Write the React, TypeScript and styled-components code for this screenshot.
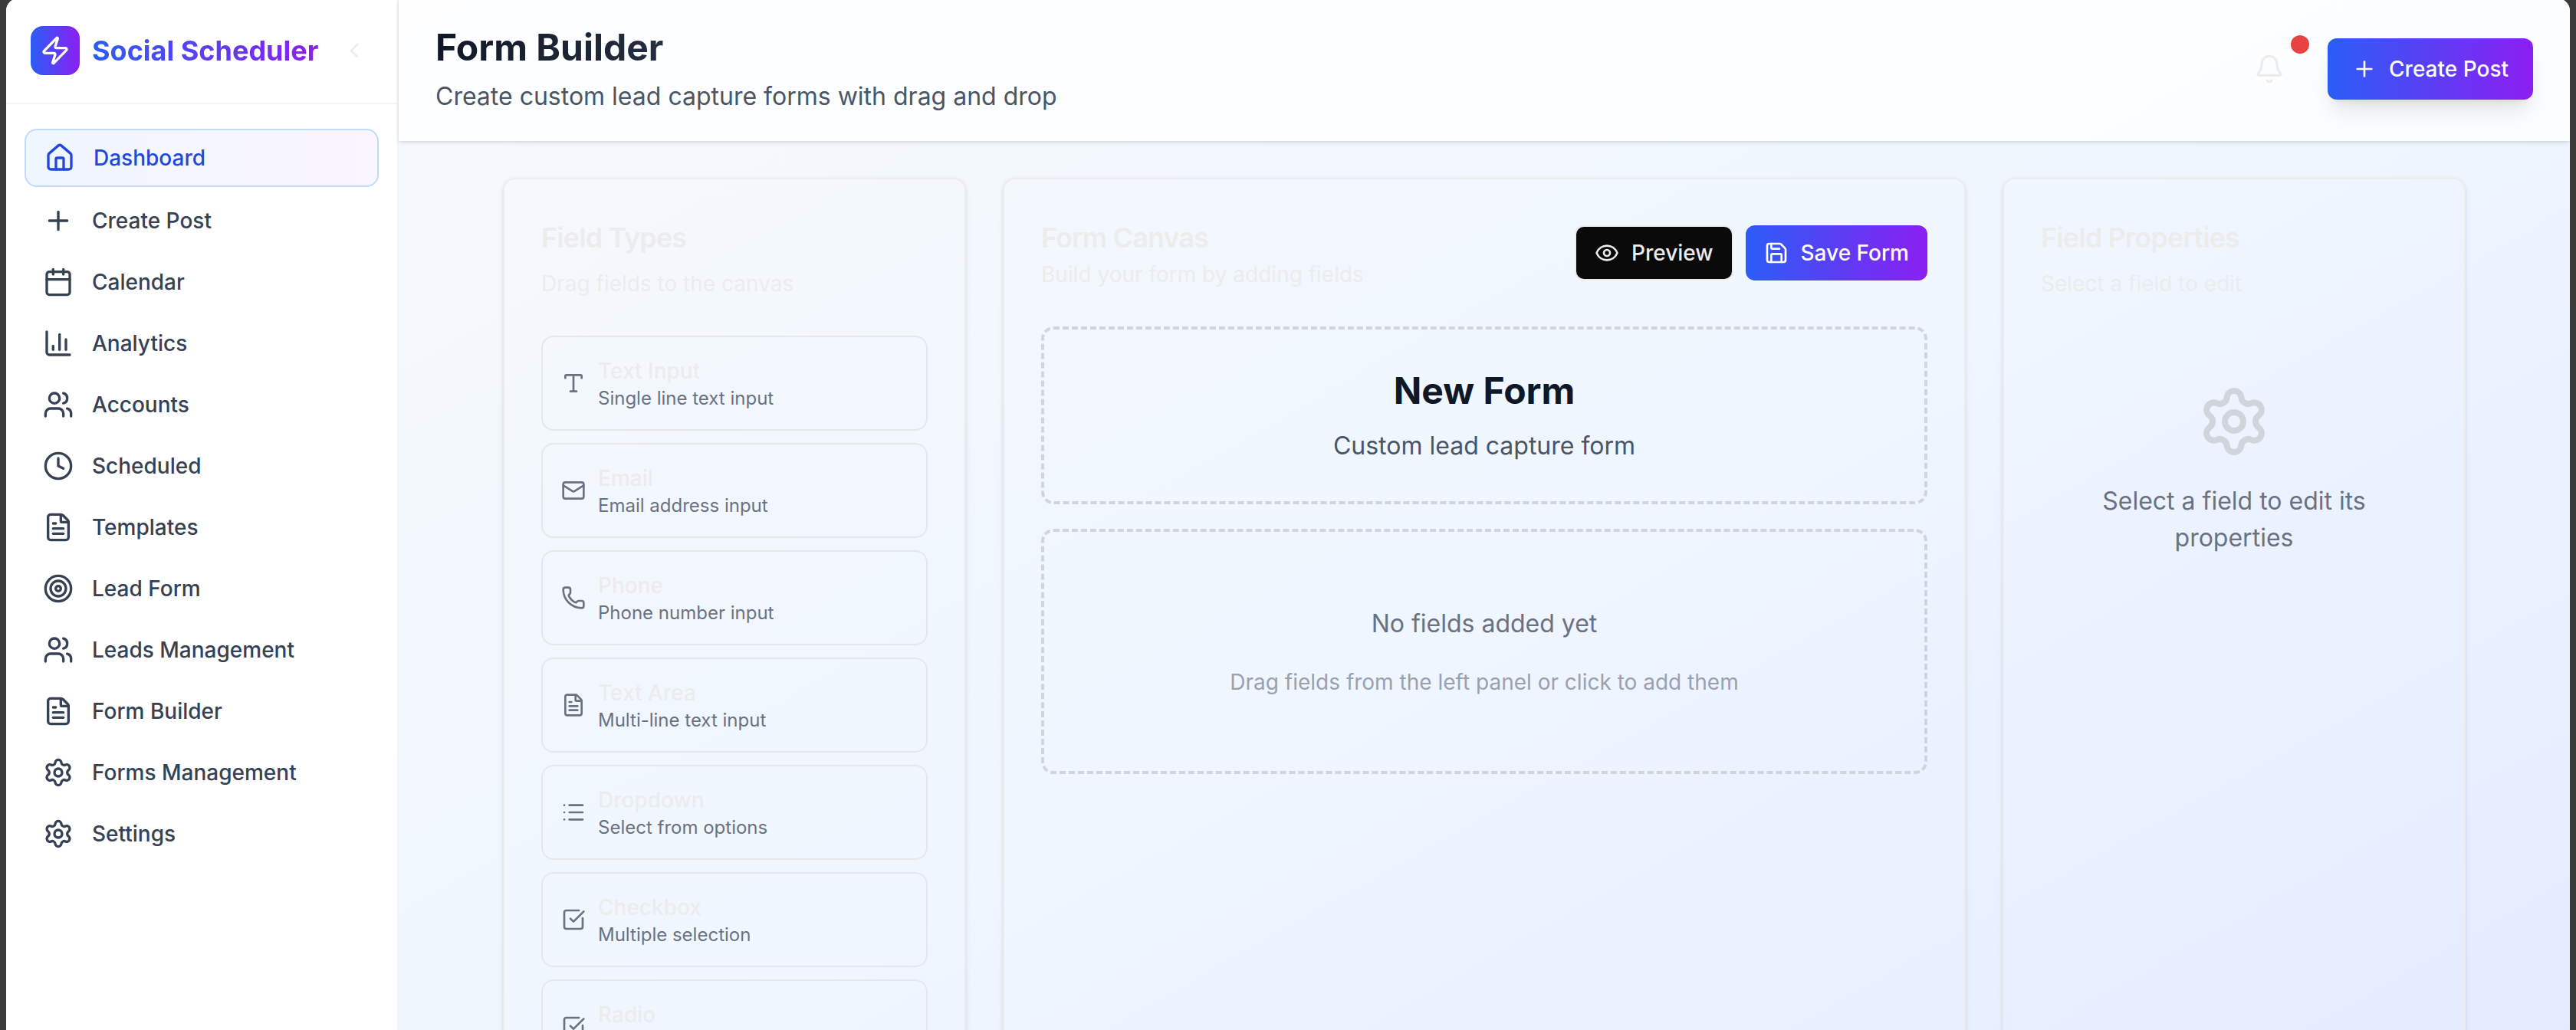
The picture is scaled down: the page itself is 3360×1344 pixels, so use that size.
import React from "react";
import styled, { createGlobalStyle, css } from "styled-components";
import {
  Bell,
  Calendar,
  ChartColumn,
  ChevronLeft,
  Clock,
  Eye,
  FileText,
  House,
  List,
  Mail,
  Phone,
  Plus,
  Save,
  Settings,
  SquareCheckBig,
  Target,
  Type,
  Users,
  Zap,
  type LucideIcon,
} from "lucide-react";

const colors = {
  faint: "#ececec",
  line: "#f3f4f6",
  outline: "#e5e7eb",
  dash: "#d1d5db",
  ink: "#101828",
  body: "#4a5565",
  nav: "#364153",
  muted: "#6a7282",
  soft: "#99a1af",
  brand: "linear-gradient(90deg, #2b5df6, #8b1ff2)",
};

const GlobalStyle = createGlobalStyle`
  *, *::before, *::after { box-sizing: border-box; }
  body {
    margin: 0;
    background: #3b3b3b;
    font-family: Inter, "Liberation Sans", sans-serif;
    font-size: 32px;
    line-height: 48px;
    color: ${colors.ink};
    -webkit-font-smoothing: antialiased;
  }
  h1, h2, h3, p, ul { margin: 0; padding: 0; }
  ul { list-style: none; }
  button { font: inherit; color: inherit; border: 0; background: none; padding: 0; cursor: pointer; }
  a { color: inherit; text-decoration: none; }
  svg { display: block; flex-shrink: 0; }
`;

const Viewport = styled.div`
  height: 100vh;
  overflow: hidden;
`;

const Window = styled.div`
  display: flex;
  min-height: 140vh;
  margin: -2px 8px 0;
  border-radius: 16px;
  overflow: hidden;
  background: linear-gradient(to bottom right, #f8fafc, #eff6ff, #e0e7ff);
`;

const Sidebar = styled.aside`
  flex: 0 0 512px;
  background: #fff;
  border-right: 2px solid ${colors.line};
`;

const Brand = styled.div`
  display: flex;
  align-items: center;
  justify-content: space-between;
  padding: 32px;
  border-bottom: 2px solid ${colors.line};
`;

const BrandName = styled.a`
  display: flex;
  align-items: center;
  gap: 16px;
`;

const BrandMark = styled.span`
  display: grid;
  place-items: center;
  width: 64px;
  height: 64px;
  border-radius: 16px;
  background: ${colors.brand};
  color: #fff;
`;

const BrandText = styled.span`
  font-size: 36px;
  font-weight: 700;
  line-height: 56px;
  background: ${colors.brand};
  background-clip: text;
  color: transparent;
`;

const CollapseButton = styled.button`
  display: grid;
  place-items: center;
  width: 48px;
  height: 72px;
  color: ${colors.faint};
`;

const NavList = styled.ul`
  display: flex;
  flex-direction: column;
  gap: 8px;
  padding: 32px 24px;
`;

const NavLink = styled.a<{ $active?: boolean }>`
  display: flex;
  align-items: center;
  gap: 24px;
  padding: 16px 24px;
  border-radius: 16px;
  font-size: 28px;
  font-weight: 500;
  line-height: 40px;
  color: ${colors.nav};
  ${({ $active }) =>
    $active &&
    css`
      border: 2px solid #bfdbfe;
      background: linear-gradient(90deg, #eff6ff, #faf5ff);
      color: #2247dd;
    `}
`;

const Main = styled.main`
  flex: 1;
  min-width: 0;
`;

const TopBar = styled.header`
  display: flex;
  align-items: center;
  justify-content: space-between;
  padding: 32px 48px;
  border-bottom: 2px solid rgba(255, 255, 255, 0.2);
  background: rgba(255, 255, 255, 0.8);
  box-shadow: 0 2px 6px rgba(0, 0, 0, 0.1), 0 2px 4px -2px rgba(0, 0, 0, 0.1);
`;

const Heading = styled.div`
  display: grid;
  gap: 8px;
`;

const PageTitle = styled.h1`
  font-size: 48px;
  font-weight: 700;
  line-height: 64px;
  background: linear-gradient(90deg, #101828, #4a5565);
  background-clip: text;
  color: transparent;
`;

const PageSubtitle = styled.p`
  color: ${colors.body};
`;

const TopActions = styled.div`
  display: flex;
  align-items: center;
  gap: 32px;
`;

const BellButton = styled.button`
  position: relative;
  padding: 16px 24px;
  color: ${colors.faint};
`;

const BellBadge = styled.span`
  position: absolute;
  top: -8px;
  right: -8px;
  width: 24px;
  height: 24px;
  border-radius: 50%;
  background: #e84343;
`;

const Button = styled.button<{ $variant?: "outline"; $large?: boolean }>`
  display: flex;
  align-items: center;
  gap: 16px;
  height: ${({ $large }) => ($large ? "80px" : "72px")};
  padding: 0 ${({ $large }) => ($large ? "32px" : "24px")};
  border-radius: 12px;
  font-size: 28px;
  font-weight: 500;
  line-height: 40px;
  color: #fff;
  background: ${colors.brand};
  ${({ $large }) =>
    $large && "box-shadow: 0 20px 30px -6px rgba(0, 0, 0, 0.1), 0 8px 12px -8px rgba(0, 0, 0, 0.1);"}
  ${({ $variant }) =>
    $variant === "outline" &&
    css`
      border: 2px solid ${colors.faint};
      background: #0a0a0a;
      color: ${colors.faint};
    `}
`;

const Board = styled.div`
  display: grid;
  grid-template-columns: repeat(4, 1fr);
  gap: 48px;
  width: 100%;
  max-width: 2656px;
  margin: 0 auto;
  padding: 48px;
`;

const Panel = styled.section<{ $wide?: boolean }>`
  grid-column: span ${({ $wide }) => ($wide ? 2 : 1)};
  padding: 48px;
  border: 2px solid ${colors.faint};
  border-radius: 16px;
  box-shadow: 0 2px 6px rgba(0, 0, 0, 0.1), 0 2px 4px -2px rgba(0, 0, 0, 0.1);
`;

const PanelHeader = styled.div<{ $row?: boolean }>`
  display: flex;
  flex-direction: ${({ $row }) => ($row ? "row" : "column")};
  ${({ $row }) => ($row ? "align-items: center; justify-content: space-between;" : "gap: 12px;")}
  margin-bottom: 48px;
  color: ${colors.faint};
`;

const PanelTitle = styled.h2`
  font-size: 36px;
  font-weight: 600;
  line-height: 56px;
  letter-spacing: -0.025em;
`;

const PanelHint = styled.p`
  font-size: 28px;
  line-height: 40px;
`;

const ButtonRow = styled.div`
  display: flex;
  gap: 16px;
`;

const FieldList = styled.ul`
  display: grid;
  gap: 16px;
`;

const FieldCard = styled.button`
  display: flex;
  align-items: center;
  gap: 16px;
  width: 100%;
  padding: 24px;
  border: 2px solid ${colors.outline};
  border-radius: 16px;
  text-align: left;
  color: ${colors.muted};
`;

const FieldText = styled.span`
  display: grid;
  grid-template-rows: 40px 32px;
`;

const FieldName = styled.span`
  font-size: 28px;
  font-weight: 500;
  line-height: 40px;
  color: ${colors.faint};
`;

const FieldHint = styled.span`
  font-size: 24px;
  line-height: 32px;
`;

const Canvas = styled.div`
  display: grid;
  gap: 32px;
`;

const DropZone = styled.div<{ $empty?: boolean }>`
  display: grid;
  gap: ${({ $empty }) => ($empty ? "32px" : "16px")};
  padding: ${({ $empty }) => ($empty ? "96px 48px" : "48px")};
  border: 4px dashed ${colors.dash};
  border-radius: 16px;
  text-align: center;
  color: ${({ $empty }) => ($empty ? colors.muted : colors.body)};
`;

const FormTitle = styled.h3`
  font-size: 48px;
  font-weight: 700;
  line-height: 64px;
  color: ${colors.ink};
`;

const DropHint = styled.p`
  font-size: 28px;
  line-height: 40px;
  color: ${colors.soft};
`;

const EmptyProperties = styled.div`
  display: flex;
  flex-direction: column;
  align-items: center;
  gap: 32px;
  padding: 64px 0;
  text-align: center;
  color: ${colors.muted};

  svg {
    color: ${colors.dash};
  }
`;

const navItems: { label: string; icon: LucideIcon; active?: boolean }[] = [
  { label: "Dashboard", icon: House, active: true },
  { label: "Create Post", icon: Plus },
  { label: "Calendar", icon: Calendar },
  { label: "Analytics", icon: ChartColumn },
  { label: "Accounts", icon: Users },
  { label: "Scheduled", icon: Clock },
  { label: "Templates", icon: FileText },
  { label: "Lead Form", icon: Target },
  { label: "Leads Management", icon: Users },
  { label: "Form Builder", icon: FileText },
  { label: "Forms Management", icon: Settings },
  { label: "Settings", icon: Settings },
];

const fieldTypes: { name: string; hint?: string; icon: LucideIcon }[] = [
  { name: "Text Input", hint: "Single line text input", icon: Type },
  { name: "Email", hint: "Email address input", icon: Mail },
  { name: "Phone", hint: "Phone number input", icon: Phone },
  { name: "Text Area", hint: "Multi-line text input", icon: FileText },
  { name: "Dropdown", hint: "Select from options", icon: List },
  { name: "Checkbox", hint: "Multiple selection", icon: SquareCheckBig },
  { name: "Radio", icon: SquareCheckBig },
];

export default function App() {
  return (
    <Viewport>
      <GlobalStyle />
      <Window>
        <Sidebar>
          <Brand>
            <BrandName href="#">
              <BrandMark>
                <Zap size={40} />
              </BrandMark>
              <BrandText>Social Scheduler</BrandText>
            </BrandName>
            <CollapseButton aria-label="Collapse sidebar">
              <ChevronLeft size={32} />
            </CollapseButton>
          </Brand>
          <nav>
            <NavList>
              {navItems.map(({ label, icon: Icon, active }) => (
                <li key={label}>
                  <NavLink href="#" $active={active}>
                    <Icon size={40} />
                    {label}
                  </NavLink>
                </li>
              ))}
            </NavList>
          </nav>
        </Sidebar>

        <Main>
          <TopBar>
            <Heading>
              <PageTitle>Form Builder</PageTitle>
              <PageSubtitle>Create custom lead capture forms with drag and drop</PageSubtitle>
            </Heading>
            <TopActions>
              <BellButton aria-label="Notifications">
                <Bell size={40} />
                <BellBadge />
              </BellButton>
              <Button $large>
                <Plus size={32} />
                Create Post
              </Button>
            </TopActions>
          </TopBar>

          <Board>
            <Panel>
              <PanelHeader>
                <PanelTitle>Field Types</PanelTitle>
                <PanelHint>Drag fields to the canvas</PanelHint>
              </PanelHeader>
              <FieldList>
                {fieldTypes.map(({ name, hint, icon: Icon }) => (
                  <li key={name}>
                    <FieldCard>
                      <Icon size={32} />
                      <FieldText>
                        <FieldName>{name}</FieldName>
                        {hint && <FieldHint>{hint}</FieldHint>}
                      </FieldText>
                    </FieldCard>
                  </li>
                ))}
              </FieldList>
            </Panel>

            <Panel $wide>
              <PanelHeader $row>
                <div>
                  <PanelTitle>Form Canvas</PanelTitle>
                  <PanelHint>Build your form by adding fields</PanelHint>
                </div>
                <ButtonRow>
                  <Button $variant="outline">
                    <Eye size={32} />
                    Preview
                  </Button>
                  <Button>
                    <Save size={32} />
                    Save Form
                  </Button>
                </ButtonRow>
              </PanelHeader>
              <Canvas>
                <DropZone>
                  <FormTitle>New Form</FormTitle>
                  <p>Custom lead capture form</p>
                </DropZone>
                <DropZone $empty>
                  <p>No fields added yet</p>
                  <DropHint>Drag fields from the left panel or click to add them</DropHint>
                </DropZone>
              </Canvas>
            </Panel>

            <Panel>
              <PanelHeader>
                <PanelTitle>Field Properties</PanelTitle>
                <PanelHint>Select a field to edit</PanelHint>
              </PanelHeader>
              <EmptyProperties>
                <Settings size={96} />
                <p>Select a field to edit its properties</p>
              </EmptyProperties>
            </Panel>
          </Board>
        </Main>
      </Window>
    </Viewport>
  );
}
